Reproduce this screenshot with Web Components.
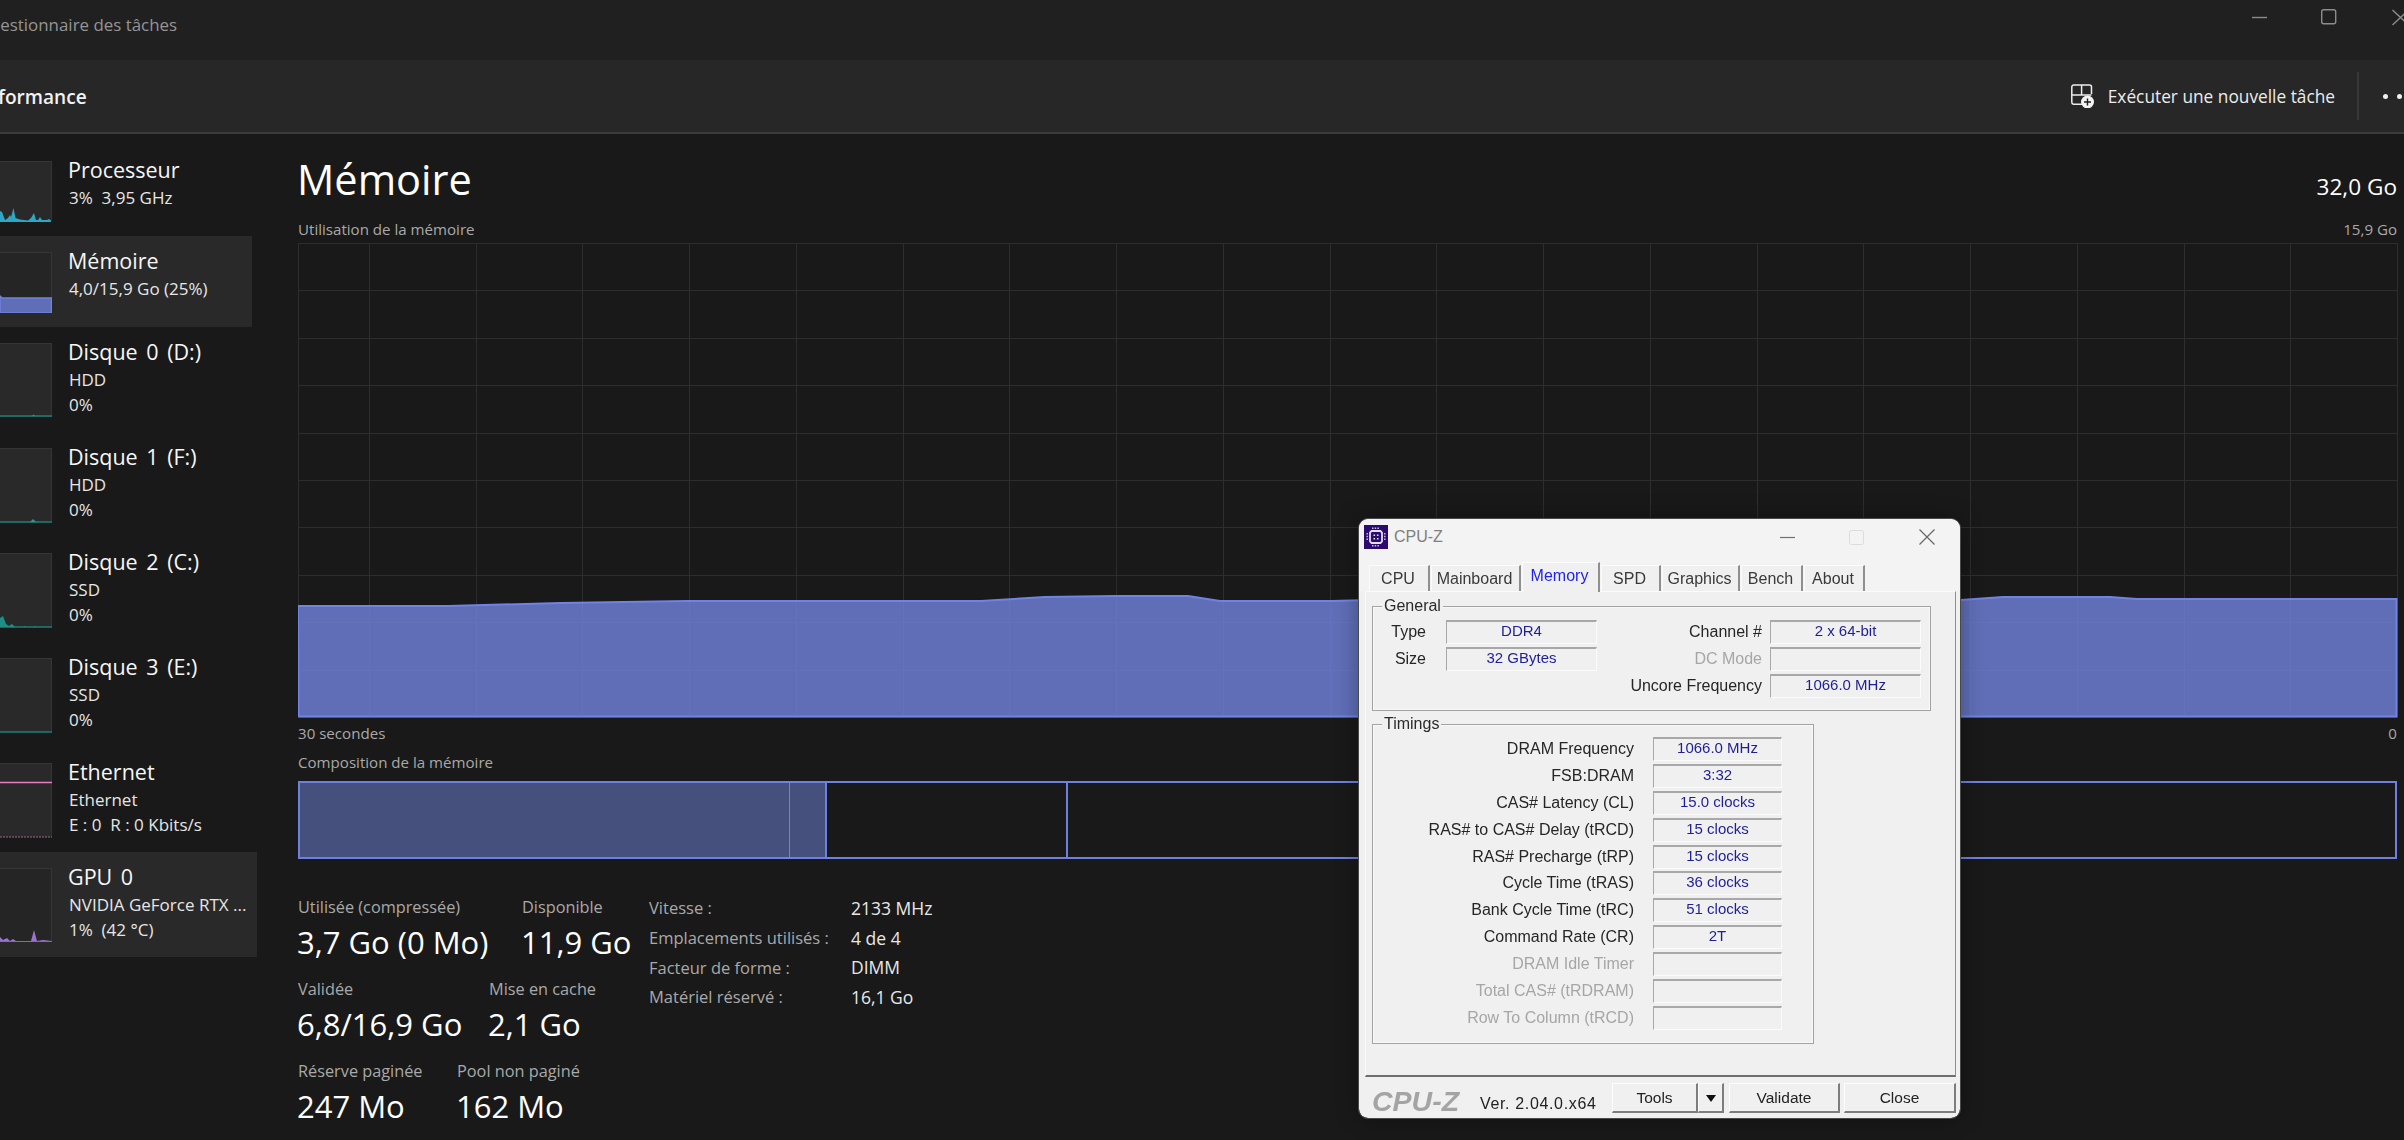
<!DOCTYPE html>
<html lang="fr">
<head>
<meta charset="utf-8">
<title>Gestionnaire des tâches</title>
<style>
  html, body { margin: 0; height: 100%; overflow: hidden; background: #191919; }
  body { font-family: "Open Sans", "Noto Sans", sans-serif; color: #fff; }
  main { display: flex; height: 1006px; }
</style>
</head>
<body>
<title-bar>Gestionnaire des tâches</title-bar>
<tool-bar>Performance</tool-bar>
<main>
  <side-nav>
    <task-item h="91" name="Processeur" line1="3%&#160;&#160;3,95 GHz" spark="cpu"></task-item>
    <task-item h="91" selected name="Mémoire" line1="4,0/15,9 Go (25%)" spark="mem"></task-item>
    <task-item name="Disque 0 (D:)" line1="HDD" line2="0%" spark="disk0"></task-item>
    <task-item name="Disque 1 (F:)" line1="HDD" line2="0%" spark="disk1"></task-item>
    <task-item name="Disque 2 (C:)" line1="SSD" line2="0%" spark="disk2"></task-item>
    <task-item name="Disque 3 (E:)" line1="SSD" line2="0%" spark="disk3"></task-item>
    <task-item name="Ethernet" line1="Ethernet" line2="E : 0&#160;&#160;R : 0 Kbits/s" spark="net"></task-item>
    <task-item selected wide name="GPU 0" line1="NVIDIA GeForce RTX ..." line2="1%&#160;&#160;(42 °C)" spark="gpu"></task-item>
  </side-nav>
  <memory-panel>
    <stat-row style="--first:224px">
      <stat-block label="Utilisée (compressée)" value="3,7 Go (0 Mo)"></stat-block>
      <stat-block label="Disponible" value="11,9 Go"></stat-block>
    </stat-row>
    <stat-row style="--first:191px">
      <stat-block label="Validée" value="6,8/16,9 Go"></stat-block>
      <stat-block label="Mise en cache" value="2,1 Go"></stat-block>
    </stat-row>
    <stat-row style="--first:159px">
      <stat-block label="Réserve paginée" value="247 Mo"></stat-block>
      <stat-block label="Pool non paginé" value="162 Mo"></stat-block>
    </stat-row>
  </memory-panel>
</main>

<cpuz-window>
  <cz-group slot="general" legend="General" style="--group-h:105px">
    <div style="display:grid;grid-template-columns:auto auto;justify-content:start;row-gap:3px;padding:13px 0 0 0">
      <cz-field lw="53" gap="20" bw="151" label="Type" value="DDR4"></cz-field>
      <cz-field lw="165" gap="8" bw="151" label="Channel #" value="2 x 64-bit"></cz-field>
      <cz-field lw="53" gap="20" bw="151" label="Size" value="32 GBytes"></cz-field>
      <cz-field lw="165" gap="8" bw="151" off label="DC Mode" value=""></cz-field>
      <span></span>
      <cz-field lw="165" gap="8" bw="151" label="Uncore Frequency" value="1066.0 MHz"></cz-field>
    </div>
  </cz-group>
  <cz-group slot="timings" legend="Timings" style="--group-h:320px">
    <div style="display:flex;flex-direction:column;gap:2.9px;padding:12px 0 0 0">
      <cz-field lw="261" gap="19" bw="129" label="DRAM Frequency" value="1066.0 MHz"></cz-field>
      <cz-field lw="261" gap="19" bw="129" label="FSB:DRAM" value="3:32"></cz-field>
      <cz-field lw="261" gap="19" bw="129" label="CAS# Latency (CL)" value="15.0 clocks"></cz-field>
      <cz-field lw="261" gap="19" bw="129" label="RAS# to CAS# Delay (tRCD)" value="15 clocks"></cz-field>
      <cz-field lw="261" gap="19" bw="129" label="RAS# Precharge (tRP)" value="15 clocks"></cz-field>
      <cz-field lw="261" gap="19" bw="129" label="Cycle Time (tRAS)" value="36 clocks"></cz-field>
      <cz-field lw="261" gap="19" bw="129" label="Bank Cycle Time (tRC)" value="51 clocks"></cz-field>
      <cz-field lw="261" gap="19" bw="129" label="Command Rate (CR)" value="2T"></cz-field>
      <cz-field lw="261" gap="19" bw="129" off label="DRAM Idle Timer" value=""></cz-field>
      <cz-field lw="261" gap="19" bw="129" off label="Total CAS# (tRDRAM)" value=""></cz-field>
      <cz-field lw="261" gap="19" bw="129" off label="Row To Column (tRCD)" value=""></cz-field>
    </div>
  </cz-group>
</cpuz-window>

<script>
class TitleBar extends HTMLElement {
  connectedCallback() {
    this.attachShadow({ mode: 'open' });
    this.shadowRoot.innerHTML = `
      <style>
        :host {
          display: flex;
          align-items: center;
          height: 60px;
          background: #202020;
          overflow: hidden;
        }
        .name { margin: -11px 0 0 -12px; font-size: 16.9px; color: #959595; flex: 1; white-space: nowrap; }
        svg { display: block; margin-top: -24px; }
      </style>
      <span class="name"><slot></slot></span>
      <svg width="152" height="24" viewBox="0 0 152 24" fill="none" stroke="#8c8c8c" stroke-width="1.4">
        <path d="M0 11.5h15" />
        <rect x="69.7" y="3.7" width="14" height="14" rx="2" />
        <path d="M140.5 4l16 15M156.5 4l-16 15" />
      </svg>
    `;
  }
}
customElements.define('title-bar', TitleBar);

class ToolBar extends HTMLElement {
  connectedCallback() {
    this.attachShadow({ mode: 'open' });
    this.shadowRoot.innerHTML = `
      <style>
        :host {
          display: flex;
          align-items: center;
          box-sizing: border-box;
          height: 74px;
          background: #272727;
          border-bottom: 2px solid #3b3b3b;
          overflow: hidden;
        }
        .page { flex: 1; margin: 2px 0 0 -33px; font-size: 19.1px; font-weight: 600; color: #f2f2f2; white-space: nowrap; }
        .run { display: flex; align-items: center; gap: 13px; font-size: 17.3px; color: #ececec; white-space: nowrap; }
        .sep { width: 2px; height: 48px; margin: 0 24px 0 22px; background: #383838; }
        .more { display: flex; gap: 9px; width: 21px; }
        .more i { flex: none; width: 5px; height: 5px; border-radius: 50%; background: #f0f0f0; }
      </style>
      <span class="page"><slot></slot></span>
      <div class="run">
        <svg width="24" height="24" viewBox="0 0 24 24" fill="none" stroke="#ededed" stroke-width="1.5">
          <path d="M11 20.2H2.5a2 2 0 0 1-1.7-2V3a2 2 0 0 1 2-2h15.700a2 2 0 0 1 2 2v7M.8 11h19.700M10.600 1v10" />
          <circle cx="16.500" cy="18" r="6.500" fill="#f4f4f4" stroke="none" />
          <path d="M16.500 14.500v7M13 18h7" stroke="#1f1f1f" stroke-width="1.4" />
        </svg>
        <span>Exécuter une nouvelle tâche</span>
      </div>
      <div class="sep"></div>
      <div class="more"><i></i><i></i><i></i></div>
    `;
  }
}
customElements.define('tool-bar', ToolBar);

class SideNav extends HTMLElement {
  connectedCallback() {
    this.attachShadow({ mode: 'open' });
    this.shadowRoot.innerHTML = `
      <style>
        :host { display: block; flex: none; width: 297px; padding-top: 11px; box-sizing: border-box; }
      </style>
      <slot></slot>
    `;
  }
}
customElements.define('side-nav', SideNav);

// small graphs on the left, coordinates are local to the 52 wide thumbnail
const SPARKS = {
  cpu: '<path d="M0 60V49L2 50L5 58L8 56L10 53L11 55L13.500 46L15.500 56L20 57.500L28 58.500L31 56L34 51L36 58L38 58L40 55L42 58L47 58L49 57L51 58.500V60z" fill="#2aa8c4" />',
  mem: '<path d="M0 43l2 2h49.500v15H0z" fill="#5f6eb6" stroke="#7083dd" stroke-width="1.500" />',
  disk0: '<path d="M0 72h52" stroke="#1f7f78" stroke-width="1.500" /><path d="M32 72l1.500-1.500 1.500 1.500z" fill="#2a9a90" />',
  disk1: '<path d="M0 73h52" stroke="#1f7f78" stroke-width="1.500" /><path d="M30 73l3-3 3 3z" fill="#2a9a90" />',
  disk2: '<path d="M0 73h52" stroke="#1f7f78" stroke-width="1.500" /><path d="M0 73V64l3-2 3 8 3 2 3-2 3 3 9 0 1-1 1 1 8 0 1-1 1 1z" fill="#1f8f86" />',
  disk3: '<path d="M0 73h52" stroke="#1f7f78" stroke-width="1.500" />',
  net: '<path d="M0 18.500h52" stroke="#e77fc0" stroke-width="1.500" /><path d="M0 73h52" stroke="#a0628c" stroke-width="1.200" stroke-dasharray="2 1" />',
  gpu: '<path d="M0 73V68l3 3 4-2 3 3 3-2 3 2 15 0 3-11 3 11 6-1 9 1z" fill="#9a72cf" /><path d="M0 72.500h52" stroke="#8a67bd" stroke-width="1.200" />'
};

class TaskItem extends HTMLElement {
  connectedCallback() {
    this.attachShadow({ mode: 'open' });
    const h = this.getAttribute('h') || 105;
    const thumbH = h - 31;
    const line2 = this.getAttribute('line2');
    this.shadowRoot.innerHTML = `
      <style>
        :host {
          display: flex;
          box-sizing: border-box;
          height: ${h}px;
          width: ${this.hasAttribute('wide') ? 257 : 252}px;
          padding-top: 16px;
          gap: 16px;
          background: ${this.hasAttribute('selected') ? '#292929' : 'transparent'};
        }
        .thumb {
          flex: none;
          width: 52px;
          height: ${thumbH}px;
          background: #292929;
          border-top: 1px solid #353535;
          border-right: 1px solid #353535;
          box-sizing: border-box;
        }
        :host([selected]) .thumb { background: #252525; }
        svg { display: block; }
        .name { font-size: 21.5px; line-height: 26px; margin: -4px 0 2px; word-spacing: 3px; color: #f6f6f6; white-space: nowrap; }
        .line { font-size: 17px; line-height: 25px; margin-left: 1px; color: #e6e6e6; white-space: nowrap; }
      </style>
      <div class="thumb">
        <svg width="52" height="${thumbH}" viewBox="0 0 52 ${thumbH}" fill="none">${SPARKS[this.getAttribute('spark')]}</svg>
      </div>
      <div>
        <div class="name">${this.getAttribute('name')}</div>
        <div class="line">${this.getAttribute('line1')}</div>
        ${line2 ? `<div class="line">${line2}</div>` : ''}
      </div>
    `;
  }
}
customElements.define('task-item', TaskItem);

class MemoryChart extends HTMLElement {
  connectedCallback() {
    this.attachShadow({ mode: 'open' });
    let grid = '';
    for (let i = 0; i <= 19; i++) {
      const x = Math.round(2099 - i * 106.74) + 0.5;
      grid += `<path d="M${x} 0V474" />`;
    }
    for (let i = 0; i <= 10; i++) {
      const y = Math.round(i * 47.4) + 0.5;
      grid += `<path d="M0 ${y}H2099" />`;
    }
    const top = '0,363 150,363 262,360 389,358 683,358 747,354 817,353 890,353 922,358 1034,358 1072,357 1663,357 1705,354 1812,354 1839,356 2098.5,356';
    this.shadowRoot.innerHTML = `
      <style>
        :host { display: block; height: 475px; }
        svg { display: block; }
      </style>
      <svg width="2100" height="475" viewBox="0 0 2100 475">
        <path d="M0.500 0V474" stroke="#2d2d2d" />
        <g stroke="#2d2d2d" fill="none">${grid}</g>
        <polygon points="${top} 2098.500,473.500 0.500,473.500" fill="#7083dd" fill-opacity=".8" />
        <polyline points="0.500,474 ${top} 2098.500,473.500 0.500,473.500" fill="none" stroke="#7083e2" stroke-width="2" />
      </svg>
    `;
  }
}
customElements.define('memory-chart', MemoryChart);

class CompBar extends HTMLElement {
  connectedCallback() {
    this.attachShadow({ mode: 'open' });
    this.shadowRoot.innerHTML = `
      <style>
        :host {
          display: flex;
          box-sizing: border-box;
          height: 78px;
          border: 2px solid #6e80e0;
        }
        div { box-sizing: border-box; border-right: 2px solid #6e80e0; }
        .used { width: 490px; background: #45507c; border-right-width: 1px; }
        .mod { width: 37px; background: #45507c; }
        .stby { width: 241px; }
        .free { flex: 1; border: 0; }
      </style>
      <div class="used"></div><div class="mod"></div><div class="stby"></div><div class="free"></div>
    `;
  }
}
customElements.define('comp-bar', CompBar);

class StatRow extends HTMLElement {
  connectedCallback() {
    this.attachShadow({ mode: 'open' });
    this.shadowRoot.innerHTML = `
      <style>
        :host { display: grid; grid-template-columns: var(--first) auto; height: 82px; }
      </style>
      <slot></slot>
    `;
  }
}
customElements.define('stat-row', StatRow);

class StatBlock extends HTMLElement {
  connectedCallback() {
    this.attachShadow({ mode: 'open' });
    this.shadowRoot.innerHTML = `
      <style>
        :host { display: block; white-space: nowrap; }
        .label { font-size: 16.3px; line-height: 24px; color: #a9a9a9; margin-top: 6px; }
        .value { font-size: 31px; line-height: 38px; margin-top: 4px; margin-left: -1px; color: #fff; }
      </style>
      <div class="label">${this.getAttribute('label')}</div>
      <div class="value">${this.getAttribute('value')}</div>
    `;
  }
}
customElements.define('stat-block', StatBlock);

class PropList extends HTMLElement {
  connectedCallback() {
    this.attachShadow({ mode: 'open' });
    const rows = [
      ['Vitesse :', '2133 MHz'],
      ['Emplacements utilisés :', '4 de 4'],
      ['Facteur de forme :', 'DIMM'],
      ['Matériel réservé :', '16,1 Go']
    ];
    this.shadowRoot.innerHTML = `
      <style>
        :host {
          display: grid;
          grid-template-columns: 202px auto;
          grid-auto-rows: 29.700px;
          align-items: center;
          align-content: start;
          padding-top: 4px;
          font-size: 16.5px;
          white-space: nowrap;
        }
        .k { color: #a9a9a9; }
        .v { color: #e8e8e8; font-size: 17.5px; }
      </style>
      ${rows.map(r => `<span class="k">${r[0]}</span><span class="v">${r[1]}</span>`).join('')}
    `;
  }
}
customElements.define('prop-list', PropList);

class MemoryPanel extends HTMLElement {
  connectedCallback() {
    this.attachShadow({ mode: 'open' });
    this.shadowRoot.innerHTML = `
      <style>
        :host {
          display: block;
          flex: 1;
          min-width: 0;
          padding: 0 7px 0 1px;
          font-size: 15.1px;
        }
        .row { display: flex; justify-content: space-between; align-items: baseline; white-space: nowrap; }
        h1 { margin: 0 0 0 -1px; font-size: 41.5px; font-weight: 400; line-height: 56px; color: #fff; }
        .size { font-size: 22.6px; color: #fff; }
        .head { height: 83px; padding-top: 17px; box-sizing: border-box; }
        .cap { color: #a9a9a9; height: 26px; line-height: 24px; }
        .legend { color: #a9a9a9; height: 30px; line-height: 30px; }
        .legend2 { color: #a9a9a9; height: 33px; line-height: 29px; }
        .bottom { display: flex; margin-top: 30px; }
        .stats { width: 351px; }
      </style>
      <div class="row head"><h1>Mémoire</h1><span class="size">32,0 Go</span></div>
      <div class="row cap"><span>Utilisation de la mémoire</span><span>15,9 Go</span></div>
      <memory-chart></memory-chart>
      <div class="row legend"><span>30 secondes</span><span>0</span></div>
      <div class="legend2">Composition de la mémoire</div>
      <comp-bar></comp-bar>
      <div class="bottom">
        <div class="stats"><slot></slot></div>
        <prop-list></prop-list>
      </div>
    `;
  }
}
customElements.define('memory-panel', MemoryPanel);

class CzGroup extends HTMLElement {
  connectedCallback() {
    this.attachShadow({ mode: 'open' });
    this.shadowRoot.innerHTML = `
      <style>
        :host {
          display: block;
          position: relative;
          box-sizing: border-box;
          height: var(--group-h);
          border: 1.500px solid #a3a3a3;
          box-shadow: 0 0 0 .5px #fff inset;
        }
        .legend {
          position: absolute;
          top: -10px;
          left: 9px;
          padding: 0 2px;
          background: #f0f0f0;
          line-height: 18px;
          color: #2a2a2a;
          font-size: 16px;
        }
      </style>
      <span class="legend">${this.getAttribute('legend')}</span>
      <slot></slot>
    `;
  }
}
customElements.define('cz-group', CzGroup);

class CzField extends HTMLElement {
  connectedCallback() {
    this.attachShadow({ mode: 'open' });
    const lw = this.getAttribute('lw');
    const bw = this.getAttribute('bw');
    const gap = this.getAttribute('gap');
    const label = this.getAttribute('label');
    const value = this.getAttribute('value');
    this.shadowRoot.innerHTML = `
      <style>
        :host { display: flex; height: 24px; align-items: center; gap: ${gap}px; white-space: nowrap; }
        .l { width: ${lw}px; text-align: right; font-size: 16px; color: #262626; }
        :host([off]) .l { color: #a6a6a6; }
        .b {
          box-sizing: border-box;
          width: ${bw}px;
          height: 24px;
          line-height: 18px;
          text-align: center;
          color: #1e1e96;
          border-top: 2px solid #a8a8a8;
          border-left: 1.500px solid #a8a8a8;
          border-bottom: 1.500px solid #fbfbfb;
          border-right: 1.500px solid #fbfbfb;
        }
      </style>
      <span class="l">${label}</span><span class="b">${value}</span>
    `;
  }
}
customElements.define('cz-field', CzField);

class CzTab extends HTMLElement {
  connectedCallback() {
    this.attachShadow({ mode: 'open' });
    this.shadowRoot.innerHTML = `
      <style>
        :host {
          display: block;
          box-sizing: border-box;
          flex: none;
          width: ${this.getAttribute('w')}px;
          height: 26px;
          margin-top: 3px;
          padding-right: 2px;
          text-align: center;
          font-size: 16px;
          line-height: 25px;
          color: #3a3a3a;
          background: #f0f0f0;
          border-top: 1px solid #fbfbfb;
          border-left: 1px solid #fbfbfb;
          border-right: 2px solid #8f8f8f;
        }
        :host([active]) {
          height: 30px;
          margin-top: 0;
          line-height: 26px;
          color: #2222ee;
          position: relative;
          z-index: 1;
        }
      </style>
      <slot></slot>
    `;
  }
}
customElements.define('cz-tab', CzTab);

class CzButton extends HTMLElement {
  connectedCallback() {
    this.attachShadow({ mode: 'open' });
    this.shadowRoot.innerHTML = `
      <style>
        :host {
          display: flex;
          box-sizing: border-box;
          flex: none;
          justify-content: center;
          align-items: center;
          width: ${this.getAttribute('w')}px;
          height: 30px;
          color: #222;
          background: #f0f0f0;
          font-size: 15.5px;
          border-top: 1.500px solid #fcfcfc;
          border-left: 1.500px solid #fcfcfc;
          border-right: 2px solid #7d7d7d;
          border-bottom: 2px solid #7d7d7d;
        }
      </style>
      <slot></slot>
    `;
  }
}
customElements.define('cz-button', CzButton);

class CpuzWindow extends HTMLElement {
  connectedCallback() {
    this.attachShadow({ mode: 'open' });
    this.shadowRoot.innerHTML = `
      <style>
        :host {
          position: absolute;
          left: 1359px;
          top: 519px;
          width: 601px;
          height: 599px;
          box-sizing: border-box;
          display: flex;
          flex-direction: column;
          background: #f0f0f0;
          border-radius: 9px;
          outline: 1.500px solid #4a4a4a;
          box-shadow: 0 0 22px rgba(0,0,0,.35);
          overflow: hidden;
          font-family: "Liberation Sans", Arial, sans-serif;
          font-size: 15px;
          color: #222;
        }
        .inner { filter: blur(.4px); display: flex; flex-direction: column; height: 100%; }
        .title { display: flex; align-items: center; height: 43px; flex: none; padding: 0 0 8px 5px; gap: 6px; background: #f3f3f3; box-sizing: border-box; }
        .title span { flex: 1; font-size: 16px; color: #808080; }
        .title svg { display: block; flex: none; }
        .tabs { display: flex; flex: none; gap: 1px; height: 29px; padding-left: 10px; background: #f3f3f3; }
        .page {
          box-sizing: border-box;
          margin: 0 4px 0 6px;
          height: 486px;
          flex: none;
          padding: 14px 0 0 6px;
          background: #f0f0f0;
          border-top: 1px solid #fbfbfb;
          border-left: 1px solid #fbfbfb;
          border-right: 1.500px solid #8f8f8f;
          border-bottom: 2px solid #6e6e6e;
        }
        ::slotted([slot="general"]) { width: 559px; }
        ::slotted([slot="timings"]) { width: 442px; margin-top: 13px; }
        .foot { display: flex; align-items: flex-start; padding: 6px 0 0 13px; }
        .logo { width: 89px; margin-top: 3px; font: italic 700 28.5px/30px "Liberation Sans", Arial, sans-serif; color: #a4a4a4; white-space: nowrap; }
        .ver { width: 116px; margin: 12px 16px 0 19px; font-size: 16px; letter-spacing: .65px; white-space: nowrap; }
        .btns { display: flex; gap: 4px; }
        .tools { display: flex; flex: none; margin-right: 1px; }
        .arrow { width: 0; height: 0; border: 5px solid transparent; border-top: 7px solid #111; margin-top: 6px; }
      </style>
      <div class="inner">
        <div class="title">
          <svg width="24" height="24" viewBox="0 0 24 24">
            <rect width="24" height="24" fill="#2c0a6e" />
            <path d="M7.500 6h9l1.500 1.500v9L16.500 18h-9L6 16.500v-9z" fill="none" stroke="#e4dff2" stroke-width="1.800" />
            <path d="M9.500 9.500h1.600v1.600H9.500zM12.900 9.500h1.600v1.600h-1.600zM9.500 12.900h1.600v1.600H9.500zM12.900 12.900h1.600v1.600h-1.600z" fill="#e4dff2" />
            <path d="M8 3.200h8M8 20.800h8M3.200 8v8M20.800 8v8" stroke="#c5bbe4" stroke-width="1.500" stroke-dasharray="1.500 1.200" />
          </svg>
          <span>CPU-Z</span>
          <svg width="180" height="24" viewBox="0 0 180 24" fill="none">
            <path d="M0 12.500h15" stroke="#707070" stroke-width="1.200" />
            <rect x="69.500" y="5.500" width="14" height="14" rx="2" stroke="#dcdcdc" />
            <path d="M139.500 4.500l15 15M154.500 4.500l-15 15" stroke="#666" stroke-width="1.200" />
          </svg>
        </div>
        <div class="tabs">
          <cz-tab w="61">CPU</cz-tab>
          <cz-tab w="90">Mainboard</cz-tab>
          <cz-tab w="78" active>Memory</cz-tab>
          <cz-tab w="60">SPD</cz-tab>
          <cz-tab w="78">Graphics</cz-tab>
          <cz-tab w="62">Bench</cz-tab>
          <cz-tab w="61">About</cz-tab>
        </div>
        <div class="page">
          <slot name="general"></slot>
          <slot name="timings"></slot>
        </div>
        <div class="foot">
          <span class="logo">CPU-Z</span>
          <span class="ver">Ver. 2.04.0.x64</span>
          <div class="btns">
            <div class="tools">
              <cz-button w="86">Tools</cz-button>
              <cz-button w="26"><i class="arrow"></i></cz-button>
            </div>
            <cz-button w="111">Validate</cz-button>
            <cz-button w="112">Close</cz-button>
          </div>
        </div>
      </div>
    `;
  }
}
customElements.define('cpuz-window', CpuzWindow);
</script>
</body>
</html>
